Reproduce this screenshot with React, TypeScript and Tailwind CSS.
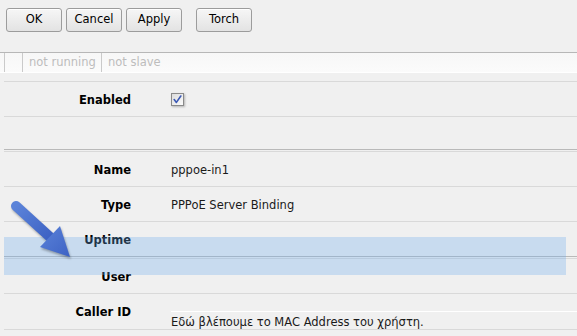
import React from 'react';

const BUTTONS = [
  { label: 'OK', gap: '' },
  { label: 'Cancel', gap: 'ml-[4px]' },
  { label: 'Apply', gap: 'ml-[4px]' },
  { label: 'Torch', gap: 'ml-[14px]' },
];

function Checkbox() {
  return (
    <div className="w-[13px] h-[13px] border border-[#8a8a8a] bg-gradient-to-br from-[#dcdcdc] to-[#fbfbfb] shadow-[1px_1px_2px_rgba(0,0,0,0.25)] flex items-center justify-center">
      <svg width="9" height="9" viewBox="0 0 9 9">
        <path d="M1.2 4.6 L3.4 7.4 L7.8 1" fill="none" stroke="#3b59b5" strokeWidth="1.6" strokeLinecap="round" strokeLinejoin="round" />
      </svg>
    </div>
  );
}

function Row({ label, children, h = 'h-[35px]', top = 'border-t border-[#d9d9d9]' }: { label?: string; children?: React.ReactNode; h?: string; top?: string }) {
  return (
    <div className={`ml-[4px] flex ${h} ${top}`}>
      <div className="w-[127px] shrink-0 text-right font-bold text-black pt-[11px] leading-[14px]">{label}</div>
      <div className="pl-[40px] flex-1 pt-[11px] leading-[14px] text-[#1a1a1a]">{children}</div>
    </div>
  );
}

function DoubleLine() {
  return (
    <div className="flex flex-col">
      <div className="ml-[4px] h-px bg-[#b9b9b9]" />
      <div className="h-px" />
    </div>
  );
}

export default function App() {
  return (
    <div className="relative w-[577px] h-[336px] overflow-hidden bg-[#f0f0f0] font-['DejaVu_Sans',sans-serif] text-[11.5px]">
      {/* Toolbar */}
      <div className="h-[52px] flex items-start pt-[8px] pl-[6px]">
        {BUTTONS.map((b) => (
          <button
            key={b.label}
            className={`${b.gap} w-[56px] h-[24px] rounded-[3px] border border-[#9c9c9c] bg-gradient-to-b from-[#f6f6f6] to-[#e3e3e3] shadow-[inset_0_1px_0_#ffffff] text-black leading-none`}
          >
            {b.label}
          </button>
        ))}
      </div>

      {/* Status bar */}
      <div className="h-[21px] border-t border-[#b7b7b7] border-b border-b-white bg-gradient-to-b from-[#f7f7f7] to-[#fbfbfb] flex text-[#bdbdbd]">
        <div className="ml-[4px] w-[18px] border-l border-[#cacaca]" />
        <div className="w-[79px] border-l border-[#cacaca] pl-[6px] leading-[19px]">not running</div>
        <div className="border-l border-[#cacaca] pl-[6px] leading-[19px]">not slave</div>
      </div>

      <div className="h-[8px]" />

      {/* Form */}
      <Row label="Enabled">
        <Checkbox />
      </Row>
      <Row h="h-[33px]" />
      <DoubleLine />
      <Row label="Name">pppoe-in1</Row>
      <Row label="Type">PPPoE Server Binding</Row>
      <Row label="Uptime" />
      <DoubleLine />
      <Row label="User" />
      <Row label="Caller ID" h="h-[36px]">
        <div className="mt-[6px] border-t border-white pt-[3px]">Εδώ βλέπουμε το MAC Address του χρήστη.</div>
      </Row>
      <div className="ml-[4px] border-t border-[#d9d9d9]" />

      {/* Highlight annotation */}
      <div className="absolute left-[4px] top-[237px] w-[562px] h-[38px] bg-[rgba(108,172,240,0.3)] pointer-events-none" />

      {/* Arrow annotation */}
      <svg className="absolute left-0 top-[195px] pointer-events-none drop-shadow-[1px_2px_1px_rgba(0,0,0,0.3)]" width="90" height="75" viewBox="0 0 90 75">
        <defs>
          <linearGradient id="ag" x1="0" y1="0" x2="1" y2="1">
            <stop offset="0" stopColor="#5b83d9" />
            <stop offset="1" stopColor="#3d62c4" />
          </linearGradient>
        </defs>
        <line x1="16" y1="11" x2="50" y2="42" stroke="url(#ag)" strokeWidth="10" strokeLinecap="round" />
        <polygon points="60,31 40,52 70,62" fill="url(#ag)" />
      </svg>
    </div>
  );
}
